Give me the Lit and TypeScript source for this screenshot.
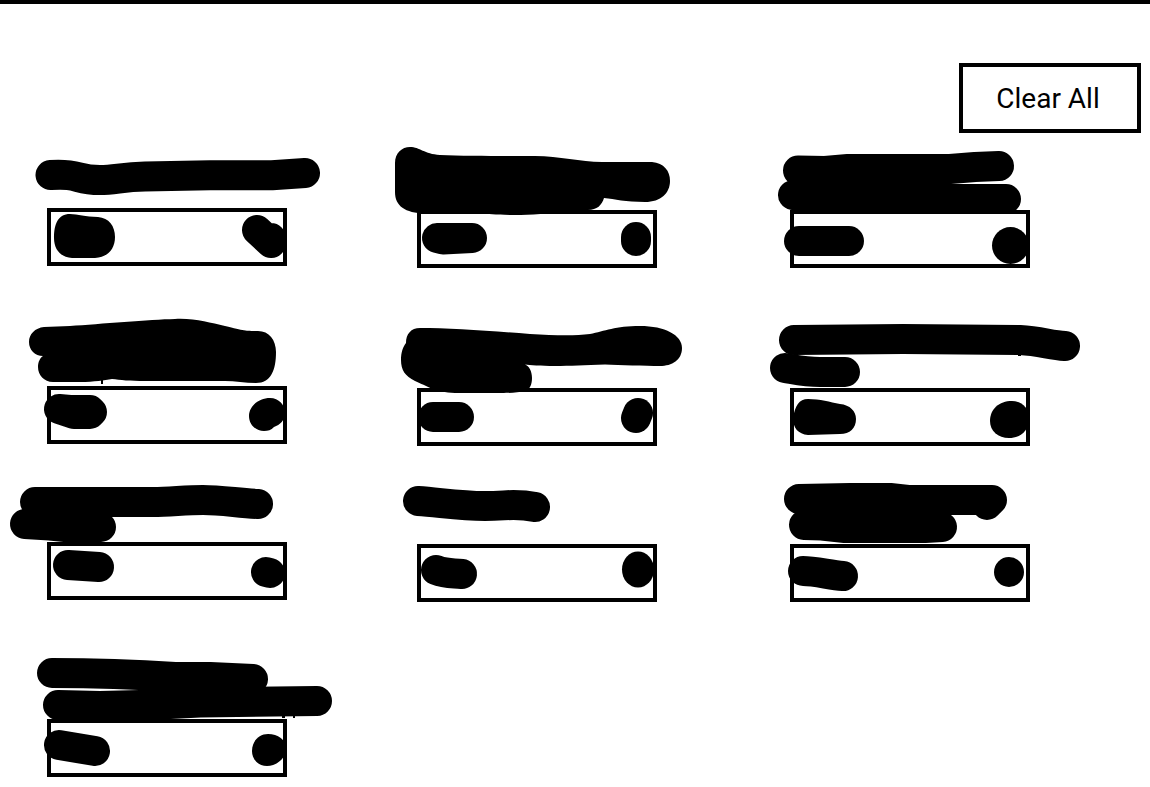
import { LitElement, html, css, svg } from "lit";
import { customElement, property } from "lit/decorators.js";

interface Card {
  name: string;
  origin: [number, number];
  /** Brush strokes, drawn with a 30px round pen. */
  strokes: string[];
  /** Filled marks with an outline of their own. */
  shapes?: string[];
}

const COLS = [47, 417, 790];
const ROWS = [148, 326, 482, 659];

const CARDS: Card[] = [
  {
    name: "Item 1",
    origin: [COLS[0], ROWS[0]],
    strokes: [
      "M50.5 175C80 173 75 180 100 180C115 180 122 177 145 176.5L210 175.3H272L305 173",
      "M257 230L271 243V238",
    ],
    shapes: [
      "M70 214C78 214 85 217 98 217C109 218 115 226 115 237C115 249 108 257 95 258H72C60 257 54 249 54 238C54 224 58 214 70 214Z",
    ],
  },
  {
    name: "Item 2",
    origin: [COLS[1], ROWS[0]],
    strokes: ["M437 238H472L443 239.5Z", "M636 237V241"],
    shapes: [
      "M410 147C420 147 424 154 440 155C465 156 500 156 535 156C560 156 580 162 602 162H652C664 163 670 171 670 181C670 193 661 202 645 202C625 202 615 199 604 198C602 205 597 210 588 210L568 211C550 213.5 530 215 515 215C495 215 490 213.5 480 213.5H425C405 213 395 206 395 192V163C395 153 402 147 410 147Z",
    ],
  },
  {
    name: "Item 3",
    origin: [COLS[2], ROWS[0]],
    strokes: [
      "M798 170.5L825 171L848 169H950L975 167L999 166",
      "M793 195L810 198L840 199H1006",
      "M799 241H849",
    ],
    shapes: ["M992 245.5a18.5 18.5 0 1 0 37 0a18.5 18.5 0 1 0 -37 0Z"],
  },
  {
    name: "Item 4",
    origin: [COLS[0], ROWS[1]],
    strokes: ["M59 409L70 410H90L92 412L90 414H74Z"],
    shapes: [
      "M44 327L70 326C100 324 150 319.5 175 319C195 318 210 323 225 326C245 331 247 331 258 331C269 331 276 340 276 352C276 370 271 383 256 383C245 383 235 381 225 381H145C130 381 120 380 112 379C104 380 95 382 80 382H53C44 382 38 375 38 367C38 362 40 358 43 356C35 356 29 350 29 342C29 334 35 328 44 327Z",
      "M101 378h2v6h-2Z",
      "M249 416C249 406 259 398 270 398C279 398 285 405 285 413C285 420 280 425 274 427C271 430 268 431 264 431C256 431 249 425 249 416Z",
    ],
  },
  {
    name: "Item 5",
    origin: [COLS[1], ROWS[1]],
    strokes: ["M433 417H459", "M636 418L638 413"],
    shapes: [
      "M420 328C450 328 490 331 530 334C555 335.5 575 336 590 334C605 331 615 326 640 326C665 326 682 335 682 348C682 360 672 366 660 366C645 366 620 365 605 364.5C585 365 570 366 555 366C540 366 530 365 525 364.5C529 366 532 371 532 378C532 384 530 389 526 391C515 393 510 393 490 393H455C435 392 427 386 415 381C405 376 401 370 401 360C401 352 403 347 406 343C406 334 411 328 420 328Z",
    ],
  },
  {
    name: "Item 6",
    origin: [COLS[2], ROWS[1]],
    strokes: [
      "M794 340L903 339L1020 340C1040 341 1050 345 1065 346",
      "M785 368C797 370 805 372 820 372H845",
    ],
    shapes: [
      "M808 399C820 399 830 402 840 404C850 405 856 411 856 419C856 428 850 434 840 434L808 435C798 434 793 428 793 418C795 406 799 399 808 399Z",
      "M990 421C990 409 999 401 1012 401C1022 401 1029 408 1029 419C1029 431 1020 438 1009 438C998 438 990 431 990 421Z",
      "M1018 354h3v2h-3Z",
    ],
  },
  {
    name: "Item 7",
    origin: [COLS[0], ROWS[2]],
    strokes: [
      "M35 502H153C170 502 185 500 203 500C220 500 235 502.5 258 504",
      "M25 524L50 525.5L65 527H101",
      "M68 565L99 567",
      "M266 572L270 573",
    ],
  },
  {
    name: "Item 8",
    origin: [COLS[1], ROWS[2]],
    strokes: [
      "M418 501C440 502.500 460 506 485 506C508 506 515 503 535 507",
      "M436 570C446 574 452 573 462 574",
    ],
    shapes: ["M622 569.5a16 18 0 1 0 32 0a16 18 0 1 0 -32 0Z"],
  },
  {
    name: "Item 9",
    origin: [COLS[2], ROWS[2]],
    strokes: [
      "M799 499L850 498H890L908 500H992L987 505",
      "M804 525L822 525.5L845 528H925L942 527",
      "M803 571C815 571 830 575 843 576",
      "M1009 572h.01",
    ],
  },
  {
    name: "Item 10",
    origin: [COLS[0], ROWS[3]],
    strokes: [
      "M52 673C85 673 130 674 175 677H210L253 679",
      "M58 705L100 706L160 704.5L200 702.5L317 701",
      "M59 745L95 751",
    ],
    shapes: [
      "M282 715h3v3h-3Z",
      "M293 715h2v3h-2Z",
      "M252 751C252 741 259 734 268 734C278 734 286 740 286 748C286 759 276 766 267 766C258 766 252 759 252 751Z",
    ],
  },
];

@customElement("item-card")
export class ItemCard extends LitElement {
  @property({ attribute: false }) card!: Card;

  static styles = css`
    :host {
      display: block;
      width: 240px;
      position: relative;
    }
    .field {
      display: block;
      box-sizing: border-box;
      width: 100%;
      height: 58px;
      margin: var(--label-height, 62px) 0 0;
      padding: 0;
      border: 4px solid #000;
      border-radius: 0;
      background: #fff;
    }
    .ink {
      position: absolute;
      top: 0;
      left: 0;
      overflow: visible;
      pointer-events: none;
    }
    .stroke {
      fill: none;
      stroke: #000;
      stroke-width: 30px;
      stroke-linecap: round;
      stroke-linejoin: round;
    }
  `;

  render() {
    const { name, origin, strokes, shapes = [] } = this.card;
    return html`
      <button class="field" type="button" aria-label=${name}></button>
      <svg
        class="ink"
        width="240"
        height="120"
        viewBox="${origin[0]} ${origin[1]} 240 120"
        aria-hidden="true"
      >
        ${strokes.map((d) => svg`<path class="stroke" d=${d} />`)}
        ${shapes.map((d) => svg`<path d=${d} />`)}
      </svg>
    `;
  }
}

@customElement("app-root")
export class AppRoot extends LitElement {
  static styles = css`
    :host {
      display: block;
      background: #fff;
      color: #000;
      font-family: Roboto, sans-serif;
      overflow: hidden;
    }
    .page {
      border-top: 4px solid #000;
    }
    .toolbar {
      display: flex;
      justify-content: flex-end;
      padding: 59px 9px 15px;
    }
    .clear {
      box-sizing: border-box;
      height: 70px;
      width: 182px;
      padding: 2px 4px 0 0;
      border: 4px solid #000;
      border-radius: 0;
      background: #fff;
      color: #000;
      font: 400 28px/32px Roboto, sans-serif;
    }
    .grid {
      display: grid;
      grid-template-columns: 370fr 373fr 360fr;
      grid-template-rows: 178px 156px 177px auto;
      padding: 0 0 8px 47px;
    }
    .card:nth-child(3n + 1) {
      --label-height: 60px;
    }
  `;

  render() {
    return html`
      <main class="page">
        <header class="toolbar">
          <button class="clear" type="button">Clear All</button>
        </header>
        <section class="grid">
          ${CARDS.map(
            (card) => html`<item-card class="card" .card=${card}></item-card>`
          )}
        </section>
      </main>
    `;
  }
}
